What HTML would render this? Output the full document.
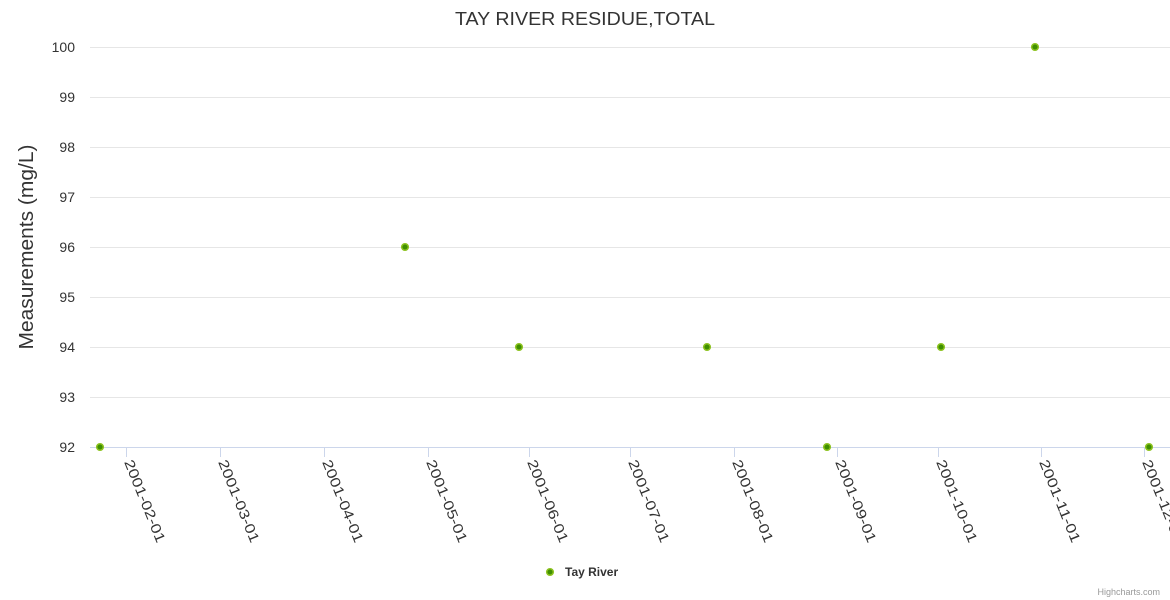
<!DOCTYPE html>
<html><head><meta charset="utf-8"><style>
html,body{margin:0;padding:0;background:#fff;width:1170px;height:600px;overflow:hidden}
svg{display:block;font-family:"Liberation Sans",sans-serif}
</style></head><body>
<svg width="1170" height="600" xmlns="http://www.w3.org/2000/svg">
<text x="585" y="25" text-anchor="middle" font-size="18" fill="#333" textLength="260" lengthAdjust="spacingAndGlyphs">TAY RIVER RESIDUE,TOTAL</text>
<g stroke="#e6e6e6" stroke-width="1">
<line x1="90" x2="1170" y1="47.5" y2="47.5"/><line x1="90" x2="1170" y1="97.5" y2="97.5"/>
<line x1="90" x2="1170" y1="147.5" y2="147.5"/><line x1="90" x2="1170" y1="197.5" y2="197.5"/>
<line x1="90" x2="1170" y1="247.5" y2="247.5"/><line x1="90" x2="1170" y1="297.5" y2="297.5"/>
<line x1="90" x2="1170" y1="347.5" y2="347.5"/><line x1="90" x2="1170" y1="397.5" y2="397.5"/>
</g>
<line x1="90" x2="1170" y1="447.5" y2="447.5" stroke="#ccd6eb"/>
<g stroke="#ccd6eb">
<line x1="126.5" x2="126.5" y1="447" y2="457"/><line x1="220.5" x2="220.5" y1="447" y2="457"/>
<line x1="324.5" x2="324.5" y1="447" y2="457"/><line x1="428.5" x2="428.5" y1="447" y2="457"/>
<line x1="529.5" x2="529.5" y1="447" y2="457"/><line x1="630.5" x2="630.5" y1="447" y2="457"/>
<line x1="734.5" x2="734.5" y1="447" y2="457"/><line x1="837.5" x2="837.5" y1="447" y2="457"/>
<line x1="938.5" x2="938.5" y1="447" y2="457"/><line x1="1041.5" x2="1041.5" y1="447" y2="457"/>
<line x1="1144.5" x2="1144.5" y1="447" y2="457"/>
</g>
<g font-size="14" fill="#333" text-anchor="end">
<text x="75" y="52">100</text><text x="75" y="102">99</text><text x="75" y="152">98</text>
<text x="75" y="202">97</text><text x="75" y="252">96</text><text x="75" y="302">95</text>
<text x="75" y="352">94</text><text x="75" y="402">93</text><text x="75" y="452">92</text>
</g>
<text transform="translate(33,247) rotate(-90)" text-anchor="middle" font-size="20" fill="#333" textLength="205" lengthAdjust="spacingAndGlyphs">Measurements (mg/L)</text>
<g font-size="14" fill="#333">
<text transform="translate(124,462) rotate(68)" textLength="88" lengthAdjust="spacingAndGlyphs">2001-02-01</text>
<text transform="translate(218,462) rotate(68)" textLength="88" lengthAdjust="spacingAndGlyphs">2001-03-01</text>
<text transform="translate(322,462) rotate(68)" textLength="88" lengthAdjust="spacingAndGlyphs">2001-04-01</text>
<text transform="translate(426,462) rotate(68)" textLength="88" lengthAdjust="spacingAndGlyphs">2001-05-01</text>
<text transform="translate(527,462) rotate(68)" textLength="88" lengthAdjust="spacingAndGlyphs">2001-06-01</text>
<text transform="translate(628,462) rotate(68)" textLength="88" lengthAdjust="spacingAndGlyphs">2001-07-01</text>
<text transform="translate(732,462) rotate(68)" textLength="88" lengthAdjust="spacingAndGlyphs">2001-08-01</text>
<text transform="translate(835,462) rotate(68)" textLength="88" lengthAdjust="spacingAndGlyphs">2001-09-01</text>
<text transform="translate(936,462) rotate(68)" textLength="88" lengthAdjust="spacingAndGlyphs">2001-10-01</text>
<text transform="translate(1039,462) rotate(68)" textLength="88" lengthAdjust="spacingAndGlyphs">2001-11-01</text>
<text transform="translate(1142,462) rotate(68)" textLength="88" lengthAdjust="spacingAndGlyphs">2001-12-01</text>
</g>
<g fill="#3f8f00" stroke="#8cc21f" stroke-width="1.5">
<circle cx="100" cy="447" r="3.3"/><circle cx="405" cy="247" r="3.3"/>
<circle cx="519" cy="347" r="3.3"/><circle cx="707" cy="347" r="3.3"/>
<circle cx="827" cy="447" r="3.3"/><circle cx="941" cy="347" r="3.3"/>
<circle cx="1035" cy="47" r="3.3"/><circle cx="1149" cy="447" r="3.3"/>
<circle cx="550" cy="572" r="3.3"/>
</g>
<text x="565" y="576" font-size="12" font-weight="bold" fill="#333">Tay River</text>
<text x="1160" y="595" text-anchor="end" font-size="9" fill="#999">Highcharts.com</text>
</svg>
</body></html>
